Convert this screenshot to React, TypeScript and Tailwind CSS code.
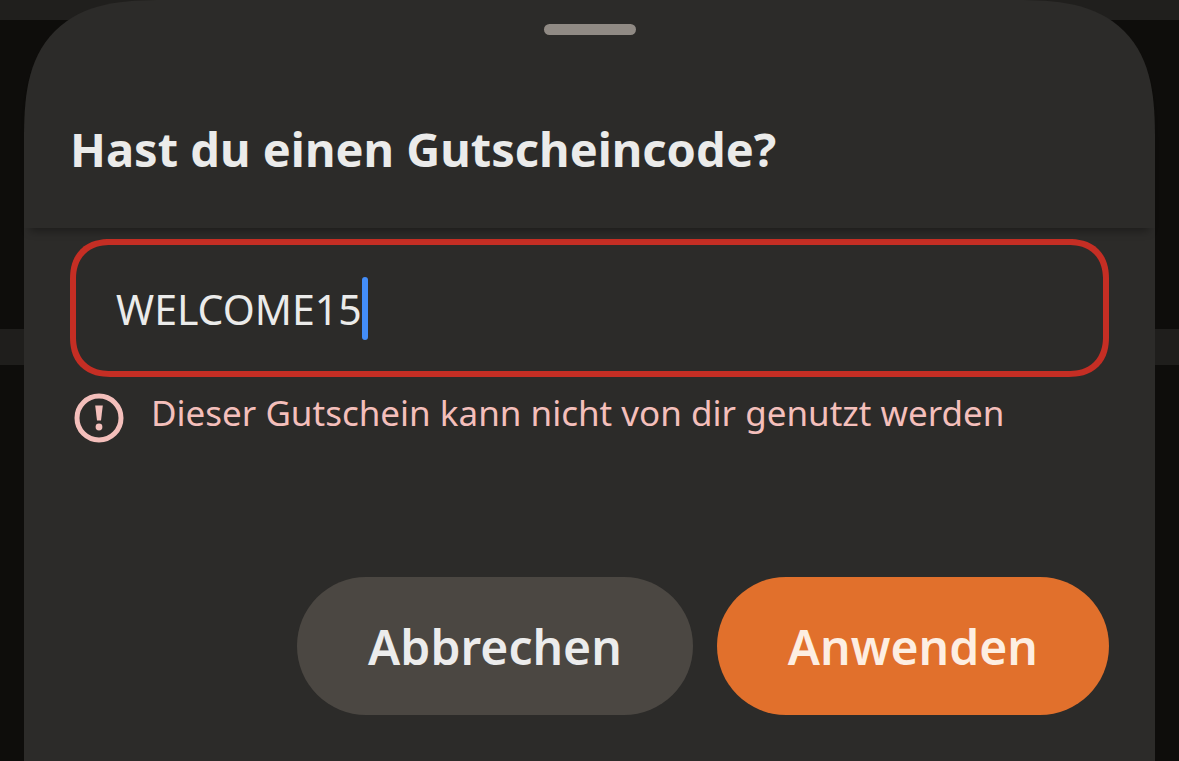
import { useState } from "react";

function ErrorIcon() {
  return (
    <svg
      className="size-[50px] shrink-0"
      viewBox="0 0 50 50"
      fill="none"
      aria-hidden="true"
    >
      <circle cx="25" cy="25" r="22" stroke="currentColor" strokeWidth="5" />
      <path
        d="M21.2 12.6h7.6L27 27.4h-4z"
        fill="currentColor"
      />
      <circle cx="25" cy="34" r="3.4" fill="currentColor" />
    </svg>
  );
}

function Backdrop() {
  return (
    <div className="[grid-area:1/1] flex flex-col bg-[#0e0d0b]" aria-hidden="true">
      <div className="h-5 bg-[#201f1d]" />
      <div className="mt-[309px] h-9 bg-[#1f1e1c]" />
    </div>
  );
}

export default function App() {
  const [code, setCode] = useState("WELCOME15");

  return (
    <div className="grid min-h-screen font-['Noto_Sans',sans-serif]">
      <Backdrop />
      <section
        role="dialog"
        aria-labelledby="voucher-title"
        className="[grid-area:1/1] mx-6 flex flex-col rounded-t-[140px] [corner-shape:superellipse(1.47)] bg-[#2c2b29] text-[#ebebea]"
      >
        <header className="relative flex h-[228px] flex-col rounded-t-[140px] [corner-shape:superellipse(1.47)] shadow-[0_9px_9px_-6px_rgba(0,0,0,0.35)]">
          <div className="mx-auto mt-6 h-[11px] w-[92px] rounded-full bg-[#908a84]" />
          <h1
            id="voucher-title"
            className="mt-20 px-[46px] text-[47px] leading-[68px] font-bold"
          >
            Hast du einen Gutscheincode?
          </h1>
        </header>
        <form
          className="flex grow flex-col px-[46px] pt-[11px] pb-[46px]"
          onSubmit={(e) => e.preventDefault()}
        >
          <label
            htmlFor="voucher-code"
            className="flex h-[138px] items-center rounded-[40px] [corner-shape:superellipse(1.2)] border-[6px] border-[#c52e24] px-10"
          >
            <input
              className="[field-sizing:content] min-w-0 bg-transparent pt-0.5 text-[41px] leading-[56px] caret-transparent outline-none"
              type="text"
              id="voucher-code"
              value={code}
              aria-labelledby="voucher-title"
              aria-invalid="true"
              aria-describedby="voucher-error"
              onChange={(e) => setCode(e.target.value)}
            />
            <span className="h-[63px] w-[6px] shrink-0 rounded-full bg-[#438df8]" />
          </label>
          <div className="mt-4 flex gap-[27px] pl-1 text-[#f4bfbb]">
            <ErrorIcon />
            <p id="voucher-error" className="text-[35px] leading-10">
              Dieser Gutschein kann nicht von dir genutzt werden
            </p>
          </div>
          <div className="mt-auto flex justify-end gap-6 text-[48px] font-semibold">
            <button
              type="button"
              className="h-[138px] rounded-full bg-[#4b4742] px-[71px] pt-0.5 text-[#ececec]"
            >
              Abbrechen
            </button>
            <button
              type="submit"
              className="h-[138px] rounded-full bg-[#e1702c] px-[71px] pt-0.5 text-[#fdeee2]"
            >
              Anwenden
            </button>
          </div>
        </form>
      </section>
    </div>
  );
}
